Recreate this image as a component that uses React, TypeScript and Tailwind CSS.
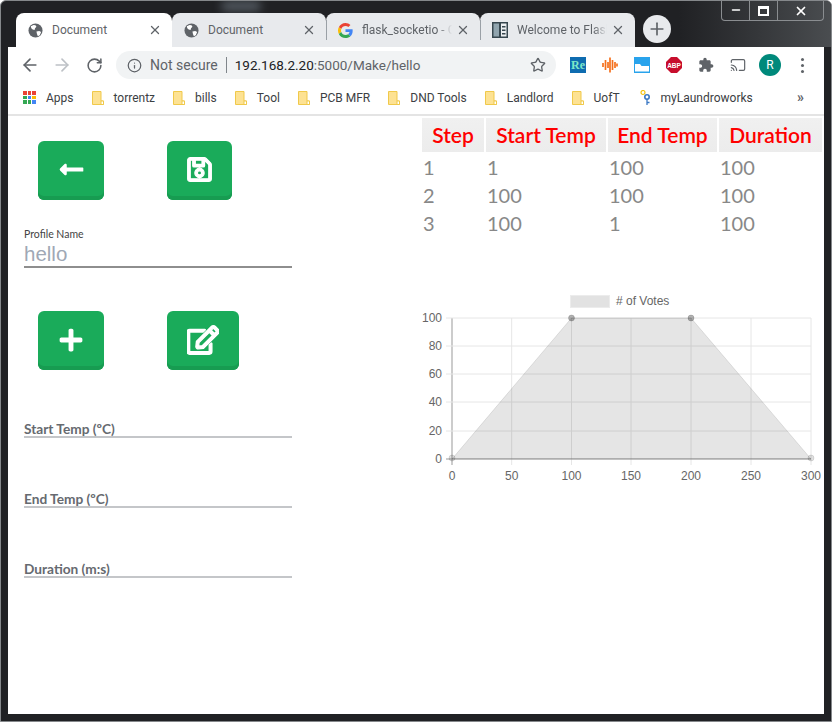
import React from 'react'
import { FaLongArrowAltLeft, FaPlus, FaRegEdit, FaRegSave } from 'react-icons/fa'
import { ArrowLeft, ArrowRight, RotateCw, Info, Star, X, Plus, Cast, Minus } from 'lucide-react'

const GlobeIcon = () => (
  <svg viewBox="0 0 16 16" className="h-[15px] w-[15px] shrink-0">
    <circle cx="8" cy="8" r="7.5" fill="#5f6368" />
    <path d="M3 3.500l3-1.500 2 .5 1 1.500-1.500 1.500-.5 2-2-.5-1.500-1.500zM9 9l3-.5 2 1-1.500 3.500-2 1-1-2.500z" fill="#fff" />
  </svg>
)

const GoogleIcon = () => (
  <svg viewBox="0 0 48 48" className="h-[15px] w-[15px] shrink-0">
    <path fill="#EA4335" d="M24 9.500c3.500 0 6.700 1.300 9.100 3.500l6.800-6.800C35.800 2.400 30.300 0 24 0 14.600 0 6.500 5.400 2.600 13.200l7.900 6.200C12.400 13.600 17.700 9.500 24 9.500z" />
    <path fill="#4285F4" d="M46.900 24.500c0-1.600-.1-3.100-.4-4.500H24v9h12.900c-.6 3-2.200 5.500-4.700 7.200l7.600 5.900c4.400-4.100 7.100-10.200 7.100-17.600z" />
    <path fill="#FBBC05" d="M10.500 28.600c-.5-1.400-.8-3-.8-4.600s.3-3.200.8-4.600l-7.900-6.200C.9 16.500 0 20.100 0 24s.9 7.500 2.600 10.800z" />
    <path fill="#34A853" d="M24 48c6.500 0 11.900-2.100 15.800-5.900l-7.600-5.900c-2.100 1.400-4.900 2.300-8.200 2.300-6.300 0-11.600-4.200-13.500-9.900l-7.900 6.200C6.500 42.600 14.600 48 24 48z" />
  </svg>
)

const ReaderIcon = () => (
  <svg viewBox="0 0 16 16" className="h-[16px] w-[16px] shrink-0">
    <rect x="0" y="0" width="16" height="16" fill="#37474f" />
    <rect x="1.500" y="1.500" width="5.500" height="13" fill="#90a4ae" />
    <rect x="9" y="1.500" width="5.500" height="13" fill="#eceff1" />
    <path d="M10 4h3.500v1.500H10zM10 7.500h3.500V9H10zM10 11h3.500v1.500H10z" fill="#37474f" />
  </svg>
)

const FolderIcon = () => (
  <svg viewBox="0 0 12 14" className="h-[14px] w-[12px] shrink-0">
    <path d="M.5.500h8.500v9.500h2.500v3.500H.5z" fill="#fde293" stroke="#f0c94a" />
    <path d="M9 10h2.500v3.500H9z" fill="#fff" stroke="#f0c94a" />
  </svg>
)

const AppsIcon = () => {
  const colors = ['#ea4335', '#ea4335', '#ea4335', '#34a853', '#4285f4', '#fbbc05', '#34a853', '#34a853', '#4285f4']
  return (
    <div className="grid h-[13px] w-[13px] shrink-0 grid-cols-3 gap-px">
      {colors.map((c, i) => (
        <span key={i} style={{ backgroundColor: c }} />
      ))}
    </div>
  )
}

const KeyIcon = () => (
  <svg viewBox="0 0 12 16" className="h-[16px] w-[12px] shrink-0">
    <circle cx="3" cy="2.500" r="2" fill="none" stroke="#f4c20d" strokeWidth="1.200" />
    <circle cx="7" cy="7" r="2.200" fill="none" stroke="#3b78c4" strokeWidth="1.600" />
    <path d="M7 9v6M7 12.500h2.500" stroke="#3b78c4" strokeWidth="1.300" fill="none" />
  </svg>
)

const tabs = [
  { title: 'Document', icon: <GlobeIcon />, width: 'w-[156px]', active: true, sep: false },
  { title: 'Document', icon: <GlobeIcon />, width: 'w-[154px]', active: false, sep: false },
  { title: 'flask_socketio - GitHub', icon: <GoogleIcon />, width: 'w-[154px]', active: false, sep: true },
  { title: 'Welcome to Flask', icon: <ReaderIcon />, width: 'w-[155px]', active: false, sep: true },
]

const bookmarks = ['torrentz', 'bills', 'Tool', 'PCB MFR', 'DND Tools', 'Landlord', 'UofT']

const TabStrip = () => (
  <div className="flex h-[34px] items-end pl-2">
    {tabs.map((tab, i) => (
      <div
        key={i}
        className={`relative flex h-[34px] items-center rounded-t-lg pl-[12px] pr-[10px] ${tab.width} ${
          tab.active ? 'bg-white' : 'bg-[#e8eaed]'
        }`}
      >
        {tab.sep && <span className="absolute left-0 top-[7px] h-[20px] w-px bg-[#9aa0a6]" />}
        {tab.icon}
        <div
          className={`ml-[9px] min-w-0 flex-1 overflow-hidden whitespace-nowrap text-[12px] text-[#5f6368] ${
            tab.title === 'Document' ? '' : '[mask-image:linear-gradient(to_right,black_85%,transparent)]'
          }`}
        >
          {tab.title}
        </div>
        <X className="ml-1 shrink-0 text-[#5f6368]" size={14} strokeWidth={2.200} />
      </div>
    ))}
    <div className="mb-[3px] ml-[8px] flex h-[28px] w-[28px] items-center justify-center self-center rounded-full bg-[#e8eaed]">
      <Plus size={20} strokeWidth={2} className="text-[#5f6368]" />
    </div>
  </div>
)

const Toolbar = () => (
  <div className="flex h-[35px] items-center bg-white pt-[1px]">
    <div className="flex w-[108px] shrink-0 items-center gap-[12px] pl-[12px]">
      <ArrowLeft size={20} className="text-[#5f6368]" strokeWidth={2} />
      <ArrowRight size={20} className="text-[#bdc1c6]" strokeWidth={2} />
      <RotateCw size={17} className="ml-[2px] text-[#5f6368]" strokeWidth={2.200} />
    </div>
    <div className="flex h-[28px] w-[440px] shrink-0 items-center rounded-full bg-[#f1f3f4] pl-[11px] pr-[10px] text-[14px]">
      <Info size={15} className="text-[#5f6368]" strokeWidth={2} />
      <span className="ml-[8px] text-[#5f6368]">Not secure</span>
      <span className="mx-[8px] h-[16px] w-px bg-[#80868b]" />
      <span className="text-[13.5px] text-[#202124]">192.168.2.20</span>
      <span className="text-[13.5px] text-[#5f6368]">:5000/Make/hello</span>
      <Star size={16} className="ml-auto text-[#5f6368]" strokeWidth={2} />
    </div>
    <div className="ml-[14px] flex items-center gap-[16px]">
      <div className="flex h-[16px] w-[16px] items-center justify-center bg-[#0f6cb0] text-[12px] font-bold text-[#7fe8c8] [font-family:'Liberation_Serif',serif]">
        Re
      </div>
      <svg viewBox="0 0 16 16" className="h-[16px] w-[16px]">
        <path d="M1 6v4M3.500 3v10M6 5v6M8 .5v15M10.500 3v10M13 5v6M15 6.500v3" stroke="#f5701c" strokeWidth="1.700" />
      </svg>
      <svg viewBox="0 0 16 16" className="h-[16px] w-[16px]">
        <rect width="16" height="16" fill="#29a3ec" />
        <path d="M1 7h5l1.500 2H15v5.500H1z" fill="#fff" />
      </svg>
      <svg viewBox="0 0 16 16" className="h-[16px] w-[16px]">
        <path d="M5 0h6l5 5v6l-5 5H5l-5-5V5z" fill="#c70d2c" />
        <text x="8" y="10.500" textAnchor="middle" fontSize="6.500" fontWeight="700" fill="#fff" fontFamily="Liberation Sans, sans-serif">
          ABP
        </text>
      </svg>
      <svg viewBox="0 0 24 24" className="h-[16px] w-[16px]" fill="#5f6368">
        <path d="M20.500 11H19V7c0-1.100-.9-2-2-2h-4V3.500C13 2.120 11.880 1 10.500 1S8 2.120 8 3.500V5H4c-1.100 0-1.990.9-1.990 2v3.800H3.500c1.490 0 2.700 1.210 2.700 2.700s-1.210 2.700-2.700 2.700H2V20c0 1.100.9 2 2 2h3.800v-1.500c0-1.490 1.210-2.700 2.700-2.700 1.490 0 2.700 1.210 2.700 2.700V22H17c1.100 0 2-.9 2-2v-4h1.500c1.380 0 2.500-1.120 2.500-2.500S21.880 11 20.500 11z" />
      </svg>
      <Cast size={16} className="text-[#5f6368]" strokeWidth={1.800} />
    </div>
    <div className="ml-[13px] flex h-[22px] w-[22px] items-center justify-center rounded-full bg-[#00897b] text-[12px] text-white">
      R
    </div>
    <div className="ml-[20px] flex flex-col gap-[3px]">
      <span className="h-[3px] w-[3px] rounded-full bg-[#5f6368]" />
      <span className="h-[3px] w-[3px] rounded-full bg-[#5f6368]" />
      <span className="h-[3px] w-[3px] rounded-full bg-[#5f6368]" />
    </div>
  </div>
)

const BookmarksBar = () => (
  <div className="flex h-[34px] items-center whitespace-nowrap border-b-2 border-[#e4e4e4] bg-white pb-[1px] pl-[15px] text-[12px] text-[#3c4043]">
    <AppsIcon />
    <span className="ml-[10px]">Apps</span>
    {bookmarks.map((b) => (
      <div key={b} className="ml-[18px] flex shrink-0 items-center gap-[10px]">
        <FolderIcon />
        <span>{b}</span>
      </div>
    ))}
    <div className="ml-[20px] flex shrink-0 items-center gap-[9px]">
      <KeyIcon />
      <span>myLaundroworks</span>
    </div>
    <span className="ml-auto mr-[20px] text-[14px] font-bold text-[#5f6368]">»</span>
  </div>
)

const GreenButton = ({ width, children }: { width: string; children: React.ReactNode }) => (
  <div
    className={`flex h-[59px] items-center justify-center rounded-[6px] bg-[#1aab5a] pb-[2px] text-white shadow-[inset_0_-4px_0_#179c51] ${width}`}
  >
    {children}
  </div>
)

const Field = ({ label, className }: { label: string; className: string }) => (
  <div
    className={`ml-[16px] h-[19px] w-[268px] border-b-2 border-[#c4c6c9] text-[13.7px] font-bold leading-[20px] text-[#666a70] ${className}`}
  >
    {label}
  </div>
)

const LeftColumn = () => (
  <div className="w-[408px] shrink-0 pt-[25px]">
    <div className="ml-[30px] flex gap-[63px]">
      <GreenButton width="w-[66px]">
        <FaLongArrowAltLeft size={27} />
      </GreenButton>
      <GreenButton width="w-[65px]">
        <FaRegSave size={27} stroke="currentColor" strokeWidth={24} />
      </GreenButton>
    </div>
    <div className="ml-[16px] mt-[28px] w-[268px] border-b-2 border-[#8e8e8e]">
      <div className="text-[10.5px] leading-[13px] text-[#444]">Profile Name</div>
      <div className="text-[20.5px] leading-[25px] text-[#9fa8b5] [font-family:'Liberation_Sans',sans-serif]">hello</div>
    </div>
    <div className="ml-[30px] mt-[43px] flex gap-[63px]">
      <GreenButton width="w-[66px]">
        <FaPlus size={26} />
      </GreenButton>
      <GreenButton width="w-[72px]">
        <FaRegEdit size={32} stroke="currentColor" strokeWidth={24} />
      </GreenButton>
    </div>
    <Field label="Start Temp (ºC)" className="mt-[49px]" />
    <Field label="End Temp (ºC)" className="mt-[51px]" />
    <Field label="Duration (m:s)" className="mt-[51px]" />
  </div>
)

const headers = [
  { label: 'Step', width: 'w-[62px]' },
  { label: 'Start Temp', width: 'w-[120px]' },
  { label: 'End Temp', width: 'w-[109px]' },
  { label: 'Duration', width: 'w-[103px]' },
]

const rows = [
  ['1', '1', '100', '100'],
  ['2', '100', '100', '100'],
  ['3', '100', '1', '100'],
]

const StepTable = () => (
  <div className="ml-[6px]">
    <div className="flex gap-[2px]">
      {headers.map((h) => (
        <div
          key={h.label}
          className={`flex h-[34px] items-center justify-center bg-gradient-to-b from-[#f0f0f0] to-[#ececec] text-[21px] font-semibold text-[#ff0000] ${h.width}`}
        >
          {h.label}
        </div>
      ))}
    </div>
    {rows.map((row, i) => (
      <div key={i} className="flex h-[28px] gap-[2px] text-[20px] leading-[30px] text-[#888888]">
        {row.map((cell, j) => (
          <div key={j} className={`pl-[1px] ${headers[j].width}`}>
            {cell}
          </div>
        ))}
      </div>
    ))}
  </div>
)

// plot area in svg coords
const xs = [36, 95.700, 155.500, 215, 275, 335, 395]
const ys = [33, 61, 89, 117, 146, 174]
const yLabels = ['100', '80', '60', '40', '20', '0']
const xLabels = ['0', '50', '100', '150', '200', '250', '300']

const VotesChart = () => (
  <svg viewBox="0 0 408 210" className="mt-[49px] block h-[210px] w-[408px]" fontFamily="Liberation Sans, Arial, sans-serif" fontSize="12" fill="#666">
    <rect x="154.500" y="10.500" width="39" height="12" fill="#e2e2e2" stroke="#ececec" />
    <text x="200" y="19.500">
      # of Votes
    </text>
    {xs.map((x, i) => (
      <line key={x} x1={x} x2={x} y1={33} y2={180} stroke={i === 0 ? '#999' : '#e6e6e6'} />
    ))}
    {ys.map((y, i) => (
      <line key={y} x1={30} x2={395} y1={y} y2={y} stroke={i === 5 ? '#999' : '#e6e6e6'} />
    ))}
    <polygon points="36,174 155.500,33 275,33 395,174" fill="rgba(0,0,0,0.1)" stroke="rgba(0,0,0,0.1)" />
    <circle cx="36" cy="173" r="3" fill="rgba(0,0,0,0.12)" stroke="rgba(0,0,0,0.1)" />
    <circle cx="155.500" cy="33" r="3" fill="rgba(0,0,0,0.3)" stroke="rgba(0,0,0,0.15)" />
    <circle cx="275" cy="33" r="3" fill="rgba(0,0,0,0.3)" stroke="rgba(0,0,0,0.15)" />
    <circle cx="395" cy="173" r="3" fill="rgba(0,0,0,0.12)" stroke="rgba(0,0,0,0.1)" />
    {yLabels.map((l, i) => (
      <text key={l} x="26" y={ys[i] + 4} textAnchor="end">
        {l}
      </text>
    ))}
    {xLabels.map((l, i) => (
      <text key={l} x={xs[i]} y="195" textAnchor="middle">
        {l}
      </text>
    ))}
  </svg>
)

const WindowControls = () => (
  <div className="absolute right-[7px] top-0 flex h-[20px] w-[103px] rounded-b-[4px] border border-t-0 border-[#8a8d90] text-white">
    <div className="flex w-[28px] items-end justify-center border-r border-[#8a8d90] pb-[4px]">
      <Minus size={12} strokeWidth={3} />
    </div>
    <div className="flex w-[28px] items-center justify-center border-r border-[#8a8d90]">
      <span className="h-[10px] w-[11px] border-2 border-t-[3px] border-white" />
    </div>
    <div className="flex flex-1 items-center justify-center">
      <X size={14} strokeWidth={3} />
    </div>
  </div>
)

export default function App() {
  return (
    <div className="relative flex h-[722px] w-[832px] flex-col overflow-hidden rounded-t-[6px] border border-[#85888b] bg-[#202124] pb-[7px] pl-[7px] pr-[7px] pt-[12px] [font-family:Roboto,sans-serif]">
      <div className="absolute left-[220px] top-0 h-[10px] w-[40px] rounded-full bg-[#8b97a3] opacity-50 blur-[5px]" />
      <div className="absolute right-0 top-0 h-[46px] w-[152px] bg-gradient-to-r from-[#202124] to-[#4a4d50]" />
      <WindowControls />
      <TabStrip />
      <Toolbar />
      <BookmarksBar />
      <div className="flex min-h-0 flex-1 bg-white [font-family:Lato,sans-serif]">
        <LeftColumn />
        <div className="flex-1 pt-[2px]">
          <StepTable />
          <VotesChart />
        </div>
      </div>
    </div>
  )
}
